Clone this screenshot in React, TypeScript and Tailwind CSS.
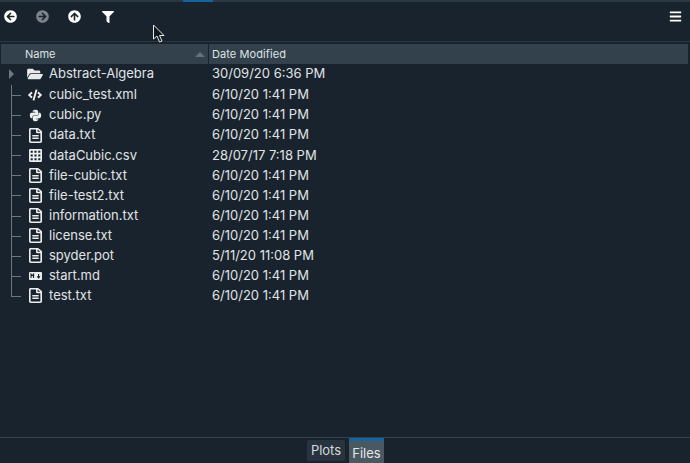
import { FaArrowCircleLeft, FaArrowCircleRight, FaArrowCircleUp, FaBars, FaCode, FaFilter, FaFolderOpen, FaPython, FaRegFileAlt } from "react-icons/fa";
import type { ReactNode } from "react";

interface FileRow {
  name: string;
  date: string;
  icon: ReactNode;
}

const doc = <FaRegFileAlt className="w-[13px] h-[15px]" preserveAspectRatio="none" />;

// 3x3 sheet icon for the csv row
const sheet = (
  <svg className="w-[13px] h-[13px]" viewBox="0 0 13 13" fill="none" stroke="currentColor" strokeWidth="1.7">
    <rect x="0.8" y="0.8" width="11.4" height="11.4" rx="0.6" />
    <path d="M4.6 1V12M8.4 1V12M1 4.6H12M1 8.4H12" />
  </svg>
);

// filled badge for the markdown row
const markdown = (
  <svg className="w-[13px] h-[8px]" viewBox="0 0 13 8">
    <rect width="13" height="8" rx="1" fill="currentColor" />
    <path d="M2 6V2.2L3.3 3.6L4.6 2.2V6M9.6 2V5.6M8.2 4.4L9.6 6L11 4.4" fill="none" stroke="#19232d" strokeWidth="1.1" />
  </svg>
);

const files: FileRow[] = [
  { name: "cubic_test.xml", date: "6/10/20 1:41 PM", icon: <FaCode className="w-[14px] h-[14px]" /> },
  { name: "cubic.py", date: "6/10/20 1:41 PM", icon: <FaPython className="w-[13px] h-[13px]" /> },
  { name: "data.txt", date: "6/10/20 1:41 PM", icon: doc },
  { name: "dataCubic.csv", date: "28/07/17 7:18 PM", icon: sheet },
  { name: "file-cubic.txt", date: "6/10/20 1:41 PM", icon: doc },
  { name: "file-test2.txt", date: "6/10/20 1:41 PM", icon: doc },
  { name: "information.txt", date: "6/10/20 1:41 PM", icon: doc },
  { name: "license.txt", date: "6/10/20 1:41 PM", icon: doc },
  { name: "spyder.pot", date: "5/11/20 11:08 PM", icon: doc },
  { name: "start.md", date: "6/10/20 1:41 PM", icon: markdown },
  { name: "test.txt", date: "6/10/20 1:41 PM", icon: doc },
];

export default function App() {
  return (
    <div className="relative w-[690px] h-[463px] overflow-hidden flex flex-col bg-[#19232d] text-[#e0e3e6] text-[13px] font-['Inter','Liberation_Sans',sans-serif]">
      {/* top strip */}
      <div className="h-[2px] bg-[#2a3843] pl-[183px] shrink-0">
        <div className="w-[30px] h-[2px] bg-[#1464a0]" />
      </div>

      {/* toolbar */}
      <div className="h-[39px] shrink-0 flex items-start pt-[8px] pl-[4px] pr-[8px]">
        <button className="w-[13px] h-[13px]"><FaArrowCircleLeft className="w-[13px] h-[13px] text-white" /></button>
        <button className="w-[13px] h-[13px] ml-[19px]"><FaArrowCircleRight className="w-[13px] h-[13px] text-[#7d8489]" /></button>
        <button className="w-[13px] h-[13px] ml-[19px]"><FaArrowCircleUp className="w-[13px] h-[13px] text-white" /></button>
        <button className="w-[13px] h-[13px] ml-[21px]"><FaFilter className="w-[12px] h-[12px] text-white" /></button>
        <button className="w-[13px] h-[13px] ml-auto"><FaBars className="w-[13px] h-[13px] text-white" /></button>
      </div>

      {/* file tree */}
      <div className="flex-1 border-t border-[#2b3843] pt-[2px] pl-[1px] pr-[2px]">
        <div className="h-[20px] flex text-[11px] text-[#dfe3e6]">
          <div className="w-[207px] bg-[#32414b] flex items-center pl-[24px] pr-[3px] justify-between">
            <span>Name</span>
            <span className="w-0 h-0 border-x-[5px] border-x-transparent border-b-[5px] border-b-[#66727b]" />
          </div>
          <div className="flex-1 ml-[1px] bg-[#32414b] flex items-center pl-[3px] tracking-[0.08px]">Date Modified</div>
        </div>

        <div className="flex h-[20px] items-center">
          <span className="ml-[8px] w-0 h-0 border-y-[5px] border-y-transparent border-l-[5px] border-l-[#6d7880]" />
          <FaFolderOpen className="ml-[13px] w-[16px] h-[14px] text-[#e8eaec]" />
          <span className="ml-[6px] w-[163px]">Abstract-Algebra</span>
          <span>30/09/20 6:36 PM</span>
        </div>

        <div className="pt-[1px]">
          {files.map((f, i) => (
            <div key={f.name} className="flex h-[20.1px] items-center">
              <div className="relative w-[21px] self-stretch shrink-0">
                <div className={`absolute left-[10px] top-0 w-[1px] bg-[#6b767e] ${i === files.length - 1 ? "h-[11px]" : "h-full"}`} />
                <div className="absolute left-[10px] top-[10px] w-[10px] h-[1px] bg-[#6b767e]" />
              </div>
              <div className="w-[27px] shrink-0 flex justify-center pr-[1px] text-[#eceef0]">{f.icon}</div>
              <span className="w-[163px] shrink-0">{f.name}</span>
              <span>{f.date}</span>
            </div>
          ))}
        </div>
      </div>

      {/* bottom tabs */}
      <div className="h-[26px] shrink-0 border-t border-[#33414c] flex justify-center">
        <div className="mt-[2px] ml-[1px] h-[21px] w-[38px] rounded-t-[2px] bg-[#27343f] text-center leading-[20px] text-[#d5d9dc]">Plots</div>
        <div className="ml-[4px] h-[25px] w-[35px] bg-[#4a5862] border-t-[3px] border-[#1464a0] text-center leading-[24px] text-[#e4e7e9]">Files</div>
      </div>

      {/* mouse pointer */}
      <svg className="absolute left-[152px] top-[24px] w-[14px] h-[20px]" viewBox="0 0 14 20">
        <path d="M1.5 1 L1.5 15 L5 12 L7.5 18 L10 17 L7.5 11.5 L12 11.5 Z" fill="#10161c" stroke="#e8e8e8" strokeWidth="1" />
      </svg>
    </div>
  );
}
